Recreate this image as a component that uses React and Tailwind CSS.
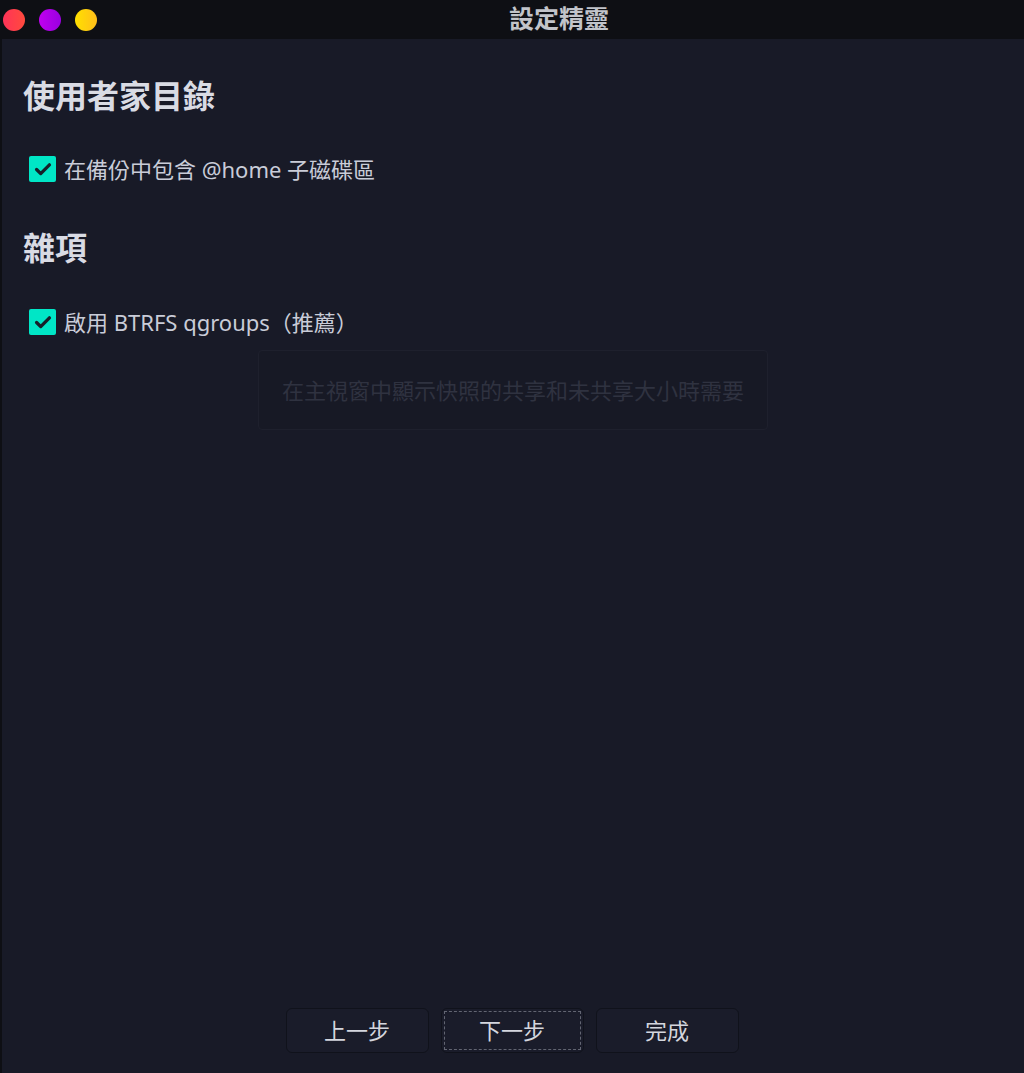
import React from 'react';

const FONT = { fontFamily: '"Noto Sans", "Noto Sans CJK TC", sans-serif' };

const Dot = ({ from, to }) => (
  <span
    className="block h-[22px] w-[22px] rounded-full"
    style={{ background: `linear-gradient(90deg, ${from}, ${to})` }}
  />
);

const Check = ({ label }) => (
  <label className="flex items-center gap-[8px] pl-[6px]">
    <span className="flex h-[26px] w-[27px] items-center justify-center rounded-[2px] bg-[#00e6c6]">
      <svg viewBox="0 0 24 24" className="h-[22px] w-[22px]" fill="none" stroke="#16202a" strokeWidth="3.6" strokeLinecap="round" strokeLinejoin="round">
        <path d="M5 12.5l4.5 4.5 9.5-9.5" />
      </svg>
    </span>
    <span className="text-[22px] leading-none text-[#c9ccd8]">{label}</span>
  </label>
);

const Button = ({ children, focused }) => (
  <button className="relative h-[45px] w-[143px] rounded-[6px] border border-[#10121b] bg-[#1a1c2a] text-[22px] text-[#d4d6de]">
    {focused && (
      <span className="pointer-events-none absolute inset-[2px] border border-dashed border-[#626572]" />
    )}
    {children}
  </button>
);

export default function App() {
  return (
    <div className="flex h-[1073px] w-full flex-col bg-[#0e0f14]" style={FONT}>
      <div className="relative flex h-[39px] shrink-0 items-center">
        <div className="flex items-center gap-[14px] pl-[3px]">
          <Dot from="#ff3358" to="#ff4a3d" />
          <Dot from="#c000f0" to="#9a00e0" />
          <Dot from="#ffe000" to="#ffbe1a" />
        </div>
        <div className="absolute inset-y-0 left-[94px] right-0 flex items-center justify-center pb-[2px] text-[25px] font-bold text-[#c2c4ca]">
          設定精靈
        </div>
      </div>

      <div className="relative ml-[2px] flex flex-1 flex-col bg-[#181a27]">
        <div className="flex flex-col pl-[21px]">
          <h2 className="mt-[36px] text-[32px] font-bold leading-[42px] text-[#d9dbe4]">使用者家目錄</h2>
          <div className="mt-[39px]">
            <Check label="在備份中包含 @home 子磁碟區" />
          </div>
          <h2 className="mt-[45px] text-[32px] font-bold leading-[42px] text-[#d9dbe4]">雜項</h2>
          <div className="mt-[40px]">
            <Check label="啟用 BTRFS qgroups（推薦）" />
          </div>
        </div>

        <div className="absolute left-[256px] top-[311px] flex h-[80px] w-[510px] items-center justify-center rounded-[4px] border border-[#1e202d] bg-[#171925] text-[22px] text-[#2f3240]">
          在主視窗中顯示快照的共享和未共享大小時需要
        </div>

        <div className="mt-auto mb-[20px] flex justify-center gap-[12px] pr-[2px]">
          <Button>上一步</Button>
          <Button focused>下一步</Button>
          <Button>完成</Button>
        </div>
      </div>
    </div>
  );
}
